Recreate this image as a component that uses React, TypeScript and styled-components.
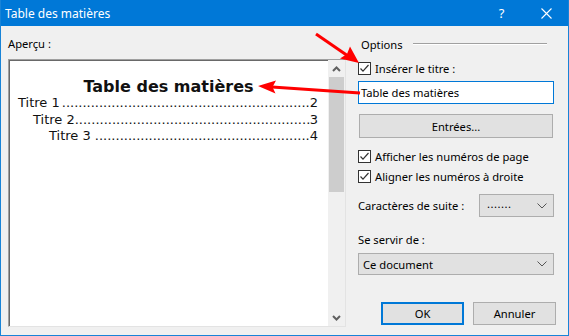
import React from 'react';
import styled, { createGlobalStyle } from 'styled-components';

const GlobalStyle = createGlobalStyle`
  html, body {
    margin: 0;
    padding: 0;
    background: #f0f0f0;
  }
  body {
    font-family: "Noto Sans", "Open Sans", sans-serif;
  }
`;

const entries = [
  { label: 'Titre 1', page: '2', indent: 9, dots: 60 },
  { label: 'Titre 2', page: '3', indent: 24, dots: 57 },
  { label: 'Titre 3\u00a0', page: '4', indent: 40, dots: 52 },
];

const Check = () => (
  <CheckBox>
    <svg width="11" height="11" viewBox="0 0 11 11">
      <polyline points="1.5,5.5 4,8.2 9.5,2" fill="none" stroke="#333" strokeWidth="1.2" />
    </svg>
  </CheckBox>
);

const ComboArrow = () => (
  <svg width="10" height="6" viewBox="0 0 10 6">
    <polyline points="0.5,0.5 5,5 9.5,0.5" fill="none" stroke="#555" strokeWidth="1" />
  </svg>
);

const ScrollArrow = ({ down }: { down?: boolean }) => (
  <svg width="9" height="6" viewBox="0 0 9 6" style={down ? { transform: 'rotate(180deg)' } : undefined}>
    <polyline points="1,5 4.5,1.5 8,5" fill="none" stroke="#606060" strokeWidth="2" />
  </svg>
);

const Arrows = () => (
  <Overlay width="569" height="336" viewBox="0 0 569 336">
    <line x1="316" y1="34" x2="348" y2="56" stroke="#ff0000" strokeWidth="3" />
    <polygon points="359,63 340,58.5 347,54 350,46.5" fill="#ff0000" />
    <line x1="360" y1="93" x2="272" y2="87" stroke="#ff0000" strokeWidth="3" />
    <polygon points="258,86 276,80.5 272.5,87 275.5,93.5" fill="#ff0000" />
  </Overlay>
);

const App = () => {
  return (
    <>
      <GlobalStyle />
      <Window>
        <TitleBar>
          <Caption>Table des matières</Caption>
          <CaptionButton>?</CaptionButton>
          <CaptionButton>
            <svg width="11" height="11" viewBox="0 0 11 11">
              <path d="M0.5 0.5 L10.5 10.5 M10.5 0.5 L0.5 10.5" stroke="#fff" strokeWidth="1.1" />
            </svg>
          </CaptionButton>
        </TitleBar>
        <Body>
          <PreviewColumn>
            <Label>Aperçu :</Label>
            <PreviewBox>
              <PreviewContent>
                <PreviewTitle>Table des matières</PreviewTitle>
                {entries.map((e) => (
                  <Entry key={e.label} $indent={e.indent}>
                    <span>{e.label}</span>
                    <Leader>{'.'.repeat(e.dots)}</Leader>
                    <span>{e.page}</span>
                  </Entry>
                ))}
              </PreviewContent>
              <ScrollBar>
                <ScrollButton>
                  <ScrollArrow />
                </ScrollButton>
                <Thumb />
                <ScrollTrack />
                <ScrollButton>
                  <ScrollArrow down />
                </ScrollButton>
              </ScrollBar>
            </PreviewBox>
          </PreviewColumn>
          <OptionsColumn>
            <GroupHeader>
              <span>Options</span>
              <GroupLine />
            </GroupHeader>
            <CheckRow $top={8}>
              <Check />
              <span>Insérer le titre :</span>
            </CheckRow>
            <TextInput>Table des matières</TextInput>
            <WideButton>Entrées...</WideButton>
            <CheckRow $top={10}>
              <Check />
              <span>Afficher les numéros de page</span>
            </CheckRow>
            <CheckRow $top={4}>
              <Check />
              <span>Aligner les numéros à droite</span>
            </CheckRow>
            <SuiteRow>
              <span>Caractères de suite :</span>
              <Combo $width={75}>
                <ComboText>.......</ComboText>
                <ComboArrow />
              </Combo>
            </SuiteRow>
            <Label $top={15}>Se servir de :</Label>
            <Combo $top={5}>
              <span>Ce document</span>
              <ComboArrow />
            </Combo>
            <ButtonRow>
              <DialogButton $default>OK</DialogButton>
              <DialogButton>Annuler</DialogButton>
            </ButtonRow>
          </OptionsColumn>
        </Body>
        <Arrows />
      </Window>
    </>
  );
};

const Window = styled.div`
  position: relative;
  box-sizing: border-box;
  width: 569px;
  height: 336px;
  display: flex;
  flex-direction: column;
  background: #f0f0f0;
  border: 1px solid #1883d7;
  border-top: none;
  font-size: 11.2px;
  color: #000;
  overflow: hidden;
`;

const TitleBar = styled.div`
  display: flex;
  align-items: center;
  height: 26px;
  margin: 0 -1px;
  padding-left: 5px;
  background: #0078d7;
  color: #fff;
  font-size: 12px;
`;

const Caption = styled.div`
  flex: 1;
`;

const CaptionButton = styled.div`
  width: 45px;
  height: 26px;
  display: flex;
  align-items: center;
  justify-content: center;
  font-size: 13px;
`;

const Body = styled.div`
  flex: 1;
  display: flex;
  gap: 12px;
  padding: 0 10px 8px 7px;
  min-height: 0;
`;

const PreviewColumn = styled.div`
  flex: 0 0 338px;
  min-width: 0;
  display: flex;
  flex-direction: column;
  padding-top: 10px;
`;

const Label = styled.div<{ $top?: number }>`
  height: 16px;
  line-height: 16px;
  margin-top: ${(p) => p.$top ?? 0}px;
`;

const PreviewBox = styled.div`
  flex: 1;
  min-width: 0;
  margin-top: 7px;
  display: flex;
  background: #fff;
  border-top: 1px solid #a0a0a0;
  border-left: 1px solid #a0a0a0;
  border-right: 1px solid #e3e3e3;
  border-bottom: 1px solid #e3e3e3;
  box-shadow: inset 1px 1px 0 #696969;
`;

const PreviewContent = styled.div`
  flex: 1 1 0;
  min-width: 0;
  overflow: hidden;
  padding: 18px 10px 0 0;
  font-family: "DejaVu Sans", Verdana, sans-serif;
  font-size: 13px;
  color: #111;
`;

const PreviewTitle = styled.div`
  font-weight: bold;
  font-size: 16px;
  line-height: 17px;
  text-align: center;
  padding-left: 10px;
  white-space: nowrap;
`;

const Entry = styled.div<{ $indent: number }>`
  display: flex;
  line-height: 16.5px;
  padding-left: ${(p) => p.$indent}px;
  white-space: nowrap;
`;

const Leader = styled.span`
  flex: 1 1 0;
  min-width: 0;
  overflow: hidden;
  text-align: right;
  white-space: nowrap;
`;

const ScrollBar = styled.div`
  flex: 0 0 17px;
  display: flex;
  flex-direction: column;
  background: #f0f0f0;
`;

const ScrollButton = styled.div`
  height: 17px;
  display: flex;
  align-items: center;
  justify-content: center;
`;

const Thumb = styled.div`
  height: 115px;
  margin: 0 1px;
  background: #cdcdcd;
`;

const ScrollTrack = styled.div`
  flex: 1;
`;

const OptionsColumn = styled.div`
  flex: 0 0 198px;
  display: flex;
  flex-direction: column;
  padding-top: 10px;
`;

const GroupHeader = styled.div`
  display: flex;
  align-items: center;
  height: 16px;
  padding-left: 3px;
`;

const GroupLine = styled.div`
  flex: 1;
  height: 1px;
  margin: 0 9px 0 10px;
  background: #a0a0a0;
  border-bottom: 1px solid #fff;
`;

const CheckRow = styled.div<{ $top: number }>`
  display: flex;
  align-items: center;
  gap: 4px;
  height: 16px;
  margin-top: ${(p) => p.$top}px;
`;

const CheckBox = styled.span`
  box-sizing: border-box;
  width: 13px;
  height: 13px;
  display: flex;
  align-items: center;
  justify-content: center;
  background: #fff;
  border: 1px solid #333;
`;

const TextInput = styled.div`
  box-sizing: border-box;
  width: 196px;
  height: 23px;
  margin-top: 5px;
  padding-left: 2px;
  display: flex;
  align-items: center;
  background: #fff;
  border: 1px solid #0078d7;
`;

const WideButton = styled.div`
  box-sizing: border-box;
  width: 194px;
  height: 24px;
  margin: 10px 0 0 1px;
  display: flex;
  align-items: center;
  justify-content: center;
  background: #e1e1e1;
  border: 1px solid #adadad;
`;

const SuiteRow = styled.div`
  display: flex;
  align-items: center;
  justify-content: space-between;
  width: 196px;
  margin-top: 10px;
`;

const Combo = styled.div<{ $width?: number; $top?: number }>`
  box-sizing: border-box;
  width: ${(p) => p.$width ?? 196}px;
  height: ${(p) => (p.$width ? 23 : 22)}px;
  margin-top: ${(p) => p.$top ?? 0}px;
  padding: 0 6px 0 4px;
  display: flex;
  align-items: center;
  justify-content: space-between;
  background: #e1e1e1;
  border: 1px solid #adadad;
`;

const ComboText = styled.span`
  letter-spacing: 0.5px;
  padding-left: 3px;
  margin-top: -4px;
`;

const ButtonRow = styled.div`
  display: flex;
  justify-content: flex-end;
  gap: 9px;
  margin-top: auto;
  margin-bottom: 2px;
`;

const DialogButton = styled.div<{ $default?: boolean }>`
  box-sizing: border-box;
  width: 83px;
  height: 23px;
  display: flex;
  align-items: center;
  justify-content: center;
  background: #e1e1e1;
  border: ${(p) => (p.$default ? '2px solid #0078d7' : '1px solid #adadad')};
`;

const Overlay = styled.svg`
  position: absolute;
  left: -1px;
  top: 0;
  pointer-events: none;
`;

export default App;
